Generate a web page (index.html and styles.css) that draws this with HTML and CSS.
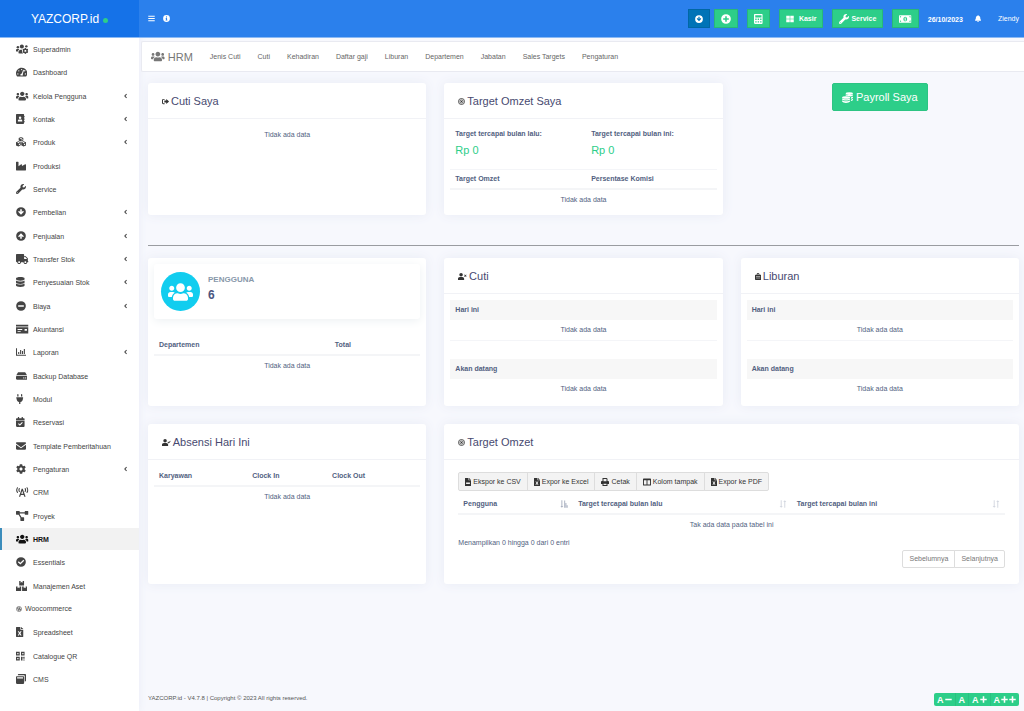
FILE: index.html
```html
<!DOCTYPE html>
<html lang="id">
<head>
<meta charset="utf-8">
<title>HRM - YAZCORP.id</title>
<meta name="viewport" content="width=device-width, initial-scale=1">
<link rel="stylesheet" href="styles.css">
</head>
<body>
<svg class="sprite" aria-hidden="true">
  <symbol id="users" viewBox="0 0 640 512"><path d="M96 224c35.3 0 64-28.7 64-64s-28.7-64-64-64-64 28.7-64 64 28.7 64 64 64zm448 0c35.3 0 64-28.7 64-64s-28.7-64-64-64-64 28.7-64 64 28.7 64 64 64zm32 32h-64c-17.600 0-33.500 7.100-45.100 18.600 40.300 22.100 68.900 62 75.100 109.400h66c17.700 0 32-14.300 32-32v-32c0-35.300-28.700-64-64-64zm-256 0c61.900 0 112-50.100 112-112S381.900 32 320 32 208 82.100 208 144s50.100 112 112 112zm76.800 32h-8.300c-20.800 10-43.900 16-68.500 16s-47.600-6-68.500-16h-8.300C179.600 288 128 339.600 128 403.200V432c0 26.500 21.500 48 48 48h288c26.500 0 48-21.500 48-48v-28.800c0-63.600-51.600-115.200-115.200-115.200zm-223.700-13.400C161.500 263.100 145.600 256 128 256H64c-35.300 0-64 28.700-64 64v32c0 17.700 14.300 32 32 32h65.900c6.300-47.400 34.900-87.300 75.200-109.400z"/></symbol>
  <symbol id="cog" viewBox="0 0 512 512"><path d="M487.400 315.700l-42.600-24.600c4.300-23.200 4.300-47 0-70.200l42.600-24.600c4.900-2.800 7.100-8.600 5.500-14-11.100-35.600-30-67.800-54.700-94.600-3.800-4.100-10-5.100-14.800-2.300L380.800 110c-17.900-15.400-38.500-27.300-60.800-35.100V25.800c0-5.600-3.900-10.500-9.400-11.700-36.700-8.200-74.300-7.800-109.200 0-5.500 1.200-9.400 6.100-9.400 11.700V75c-22.200 7.900-42.800 19.800-60.800 35.100L88.700 85.500c-4.900-2.800-11-1.900-14.800 2.300-24.700 26.700-43.600 58.900-54.700 94.600-1.700 5.400.6 11.200 5.500 14L67.300 221c-4.300 23.200-4.300 47 0 70.200l-42.600 24.600c-4.900 2.800-7.100 8.600-5.500 14 11.100 35.600 30 67.800 54.700 94.600 3.800 4.100 10 5.100 14.800 2.300l42.600-24.600c17.900 15.400 38.500 27.300 60.800 35.100v49.200c0 5.600 3.900 10.500 9.400 11.700 36.700 8.200 74.300 7.800 109.200 0 5.500-1.200 9.400-6.100 9.400-11.700v-49.200c22.200-7.900 42.800-19.800 60.800-35.100l42.600 24.600c4.900 2.800 11 1.900 14.800-2.300 24.700-26.700 43.600-58.900 54.700-94.600 1.500-5.500-.7-11.300-5.600-14.100zM256 336c-44.100 0-80-35.900-80-80s35.900-80 80-80 80 35.900 80 80-35.900 80-80 80z"/></symbol>
  <symbol id="users-cog" viewBox="0 0 640 512"><circle cx="96" cy="160" r="64"/><circle cx="300" cy="130" r="104"/><circle cx="530" cy="120" r="60"/><path d="M0 352v-32c0-35 29-64 64-64h64c18 0 34 7 45 19-40 22-69 62-75 109H32c-18 0-32-14-32-32zM128 432v-29c0-64 52-115 115-115h9c20 8 40 12 60 8-20 60-5 130 50 184H176c-27 0-48-21-48-48z"/><svg x="320" y="192" width="320" height="320" viewBox="0 0 512 512"><use href="#cog"/></svg></symbol>
  <symbol id="wrench" viewBox="0 0 512 512"><path d="M507.730 109.100c-2.240-9.030-13.540-12.090-20.120-5.510l-74.360 74.360-67.880-11.310-11.310-67.880 74.360-74.360c6.620-6.620 3.430-17.900-5.660-20.160-47.380-11.740-99.550.91-136.580 37.930-39.640 39.640-50.550 97.100-34.050 147.200L18.740 402.760c-24.990 24.990-24.990 65.510 0 90.500 24.990 24.990 65.510 24.990 90.500 0l213.210-213.210c50.120 16.710 107.470 5.680 147.370-34.220 37.070-37.070 49.700-89.320 37.910-136.730zM64 472c-13.250 0-24-10.750-24-24 0-13.260 10.750-24 24-24s24 10.740 24 24c0 13.250-10.750 24-24 24z"/></symbol>
  <symbol id="truck" viewBox="0 0 640 512"><path d="M624 352h-16V243.900c0-12.700-5.100-24.900-14.100-33.900L494 110.100c-9-9-21.200-14.100-33.900-14.100H416V48c0-26.500-21.500-48-48-48H48C21.500 0 0 21.500 0 48v320c0 26.500 21.500 48 48 48h16c0 53 43 96 96 96s96-43 96-96h128c0 53 43 96 96 96s96-43 96-96h48c8.800 0 16-7.200 16-16v-32c0-8.800-7.200-16-16-16zM160 464c-26.500 0-48-21.500-48-48s21.500-48 48-48 48 21.500 48 48-21.500 48-48 48zm320 0c-26.500 0-48-21.500-48-48s21.500-48 48-48 48 21.500 48 48-21.500 48-48 48zm80-208H416V144h44.100l99.900 99.900V256z"/></symbol>
  <symbol id="database" viewBox="0 0 448 512"><path d="M448 73v46c0 40-100 73-224 73S0 159 0 119V73C0 33 100 0 224 0s224 33 224 73zM448 176v103c0 40-100 73-224 73S0 319 0 279V176c48 33 136 49 224 49s176-16 224-49zm0 160v103c0 40-100 73-224 73S0 479 0 439V336c48 33 136 49 224 49s176-16 224-49z"/></symbol>
  <symbol id="gauge" viewBox="0 0 576 512"><path fill-rule="evenodd" d="M288 32C129 32 0 161 0 320c0 53 14 102 39 145 6 9 16 15 27 15h444c11 0 21-6 27-15 25-43 39-92 39-145C576 161 447 32 288 32zm0 64a32 32 0 1 1 0 64 32 32 0 0 1 0-64zM96 384a32 32 0 1 1 0-64 32 32 0 0 1 0 64zm48-160a32 32 0 1 1 0-64 32 32 0 0 1 0 64zm246-72c12 4 19 17 15 30l-61 184c15 16 13 38 2 66H230c-12-50 14-94 69-96l61-184c4-12 17-4 30 0zM432 224a32 32 0 1 1 32-64 32 32 0 0 1-32 64zm48 160a32 32 0 1 1 0-64 32 32 0 0 1 0 64z"/></symbol>
  <symbol id="contact" viewBox="0 0 448 512"><path fill-rule="evenodd" d="M48 0h320c27 0 48 21 48 48v48h32v64h-32v64h32v64h-32v64h32v64h-32v48c0 27-21 48-48 48H48c-27 0-48-21-48-48V48C0 21 21 0 48 0zm160 128a64 64 0 1 0 0 128 64 64 0 0 0 0-128zM96 384h224v-40c0-40-30-64-70-64h-84c-40 0-70 24-70 64z"/></symbol>
  <symbol id="cubes" viewBox="0 0 512 512"><path fill-rule="evenodd" d="M256 0l118 48v132l-118 52-118-52V48zM256 40l-70 28 70 30 70-30zM276 184l60-26V98l-60 26zM126 216l118 50v150l-118 64L0 430V268zM126 260l-68 26 68 30 68-30zM146 424l60-30v-62l-60 26zM386 216l126 52v162l-126 50-118-64V266zM386 260l-68 26 68 30 68-30zM406 424l62-26v-66l-62 26z"/></symbol>
  <symbol id="factory" viewBox="0 0 512 512"><path d="M0 56c0-14 10-24 24-24h80c14 0 24 10 24 24v210l136-102c16-10 40 0 40 20v78l168-96c18-8 40 2 40 22v268c0 14-10 24-24 24H24c-14 0-24-10-24-24z"/></symbol>
  <symbol id="down" viewBox="0 0 512 512"><path fill-rule="evenodd" d="M256 8a248 248 0 1 0 0 496 248 248 0 0 0 0-496zM216 110h80v142l58-56 50 50-148 150-148-150 50-50 58 56z"/></symbol>
  <symbol id="up" viewBox="0 0 512 512"><path fill-rule="evenodd" d="M256 8a248 248 0 1 0 0 496 248 248 0 0 0 0-496zM216 402h80V260l58 56 50-50-148-150-148 150 50 50 58-56z"/></symbol>
  <symbol id="minus-c" viewBox="0 0 512 512"><path fill-rule="evenodd" d="M256 8a248 248 0 1 0 0 496 248 248 0 0 0 0-496zM112 212h288v88H112z"/></symbol>
  <symbol id="plus-c" viewBox="0 0 512 512"><path fill-rule="evenodd" d="M256 8a248 248 0 1 0 0 496 248 248 0 0 0 0-496zM216 112h80v104h104v80H296v104h-80V296H112v-80h104z"/></symbol>
  <symbol id="info" viewBox="0 0 512 512"><path fill-rule="evenodd" d="M256 8a248 248 0 1 0 0 496 248 248 0 0 0 0-496zM256 100a44 44 0 1 1 0 88 44 44 0 0 1 0-88zM196 216h100v128h24v56H192v-56h24v-72h-20z"/></symbol>
  <symbol id="check-c" viewBox="0 0 512 512"><path fill-rule="evenodd" d="M256 8a248 248 0 1 0 0 496 248 248 0 0 0 0-496zM222 390L94 264l46-46 82 80 154-154 46 46z"/></symbol>
  <symbol id="money-check" viewBox="0 0 640 512"><path fill-rule="evenodd" d="M0 32h640v96H0zM0 160h640v320H0zM80 260v44h240v-44zM80 356v44h160v-44zM440 250v100h120V250z"/></symbol>
  <symbol id="chart" viewBox="0 0 512 512"><path d="M0 64h52v332h460v52H0zM110 250h56v110h-56zM210 150h56v210h-56zM305 210h56v150h-56zM400 100h56v260h-56z"/></symbol>
  <symbol id="hdd" viewBox="0 0 576 512"><path fill-rule="evenodd" d="M130 64h316c16 0 30 8 40 22l84 138c-14-8-24-10-42-10H48c-18 0-28 2-42 10L90 86c10-14 24-22 40-22zM48 256h480c27 0 48 21 48 48v96c0 27-21 48-48 48H48c-27 0-48-21-48-48v-96c0-27 21-48 48-48zM496 320a32 32 0 1 0 0 64 32 32 0 0 0 0-64zM400 320a32 32 0 1 0 0 64 32 32 0 0 0 0-64z"/></symbol>
  <symbol id="plug" viewBox="0 0 384 512"><path d="M64 32a32 32 0 0 1 64 0v96H64zM256 32a32 32 0 0 1 64 0v96h-64zM16 160h352v64h-16v32c0 78-54 142-128 157v99h-64v-99C86 398 32 334 32 256v-32H16z"/></symbol>
  <symbol id="calendar" viewBox="0 0 448 512"><path fill-rule="evenodd" d="M48 64h48V0h64v64h128V0h64v64h48c27 0 48 21 48 48v48H0v-48c0-27 21-48 48-48zM0 192h448v272c0 27-21 48-48 48H48c-27 0-48-21-48-48zM198 446l150-150-38-38-112 112-56-56-38 38z"/></symbol>
  <symbol id="mail" viewBox="0 0 512 512"><path d="M0 112c0-27 21-48 48-48h416c27 0 48 21 48 48v20L256 316 0 132zM0 192l256 176 256-176v208c0 27-21 48-48 48H48c-27 0-48-21-48-48z"/></symbol>
  <symbol id="antenna" viewBox="0 0 640 512"><path fill="none" stroke="currentColor" stroke-width="56" stroke-linecap="round" d="M76 36c-50 80-50 170 0 240M564 36c50 80 50 170 0 240M172 84c-28 46-28 98 0 144M468 84c28 46 28 98 0 144"/><path fill-rule="evenodd" d="M290 90h60l140 410h-66l-30-90H246l-30 90h-66zM320 196l-52 150h104z"/></symbol>
  <symbol id="project" viewBox="0 0 640 512"><path d="M24 0h144c14 0 24 10 24 24v40h256V24c0-14 10-24 24-24h144c14 0 24 10 24 24v144c0 14-10 24-24 24H472c-14 0-24-10-24-24v-40H192v32l92 160h108c14 0 24 10 24 24v144c0 14-10 24-24 24H248c-14 0-24-10-24-24V344l-90-152H24c-14 0-24-10-24-24V24C0 10 10 0 24 0z"/></symbol>
  <symbol id="boxes" viewBox="0 0 576 512"><path d="M164 0h70v90l54-34 54 34V0h70v224H164zM0 280h80v90l50-34 50 34v-90h84v232H0zM312 280h84v90l50-34 50 34v-90h80v232H312z"/></symbol>
  <symbol id="wp" viewBox="0 0 512 512"><circle cx="256" cy="256" r="220" fill="none" stroke="currentColor" stroke-width="44"/><path fill="none" stroke="currentColor" stroke-width="58" d="M100 150h110M130 160l80 230 60-200M240 150h120M270 160l80 230 60-170"/></symbol>
  <symbol id="file-x" viewBox="0 0 384 512"><path fill-rule="evenodd" d="M24 0h200v136h160v352c0 14-10 24-24 24H24c-14 0-24-10-24-24V24C0 10 10 0 24 0zM256 0l128 104H256zM90 220l62 100-62 110h62l36-68 38 68h62l-62-110 62-100h-62l-38 62-36-62z"/></symbol>
  <symbol id="file" viewBox="0 0 384 512"><path fill-rule="evenodd" d="M24 0h200v136h160v352c0 14-10 24-24 24H24c-14 0-24-10-24-24V24C0 10 10 0 24 0zM256 0l128 104H256zM70 290v90h244v-90z"/></symbol>
  <symbol id="qr" viewBox="0 0 448 512"><path fill-rule="evenodd" d="M0 32h192v192H0zm64 64v64h64V96zM256 32h192v192H256zm64 64v64h64V96zM0 288h192v192H0zm64 64v64h64v-64zM256 288h70v40h60v-40h62v110h-62v-30h-60v112h-70zM350 430h40v50h-40zM408 430h40v50h-40z"/></symbol>
  <symbol id="copies" viewBox="0 0 512 512"><path fill-rule="evenodd" d="M144 0h320c27 0 48 21 48 48v288c0 27-21 48-48 48h-16V112c0-27-21-48-48-48H96V48c0-27 21-48 48-48zM48 112h320c27 0 48 21 48 48v304c0 27-21 48-48 48H48c-27 0-48-21-48-48V160c0-27 21-48 48-48zM56 170v60h304v-60z"/></symbol>
  <symbol id="bars" viewBox="0 0 512 512"><path d="M20 60h472v64H20zM20 224h472v64H20zM20 388h472v64H20z"/></symbol>
  <symbol id="calc" viewBox="0 0 448 512"><path fill-rule="evenodd" d="M48 0h352c27 0 48 21 48 48v416c0 27-21 48-48 48H48c-27 0-48-21-48-48V48C0 21 21 0 48 0zM64 64v112h320V64zM64 236v70h70v-70zM189 236v70h70v-70zM314 236v70h70v-70zM64 370v70h70v-70zM189 370v70h70v-70zM314 370v70h70v-70z"/></symbol>
  <symbol id="grid4" viewBox="0 0 512 512"><path d="M16 48h224v192H16zM272 48h224v192H272zM16 272h224v192H16zM272 272h224v192H272z"/></symbol>
  <symbol id="cash" viewBox="0 0 640 512"><path fill-rule="evenodd" d="M32 64h576c18 0 32 14 32 32v320c0 18-14 32-32 32H32c-18 0-32-14-32-32V96c0-18 14-32 32-32zM48 400h64c0-35-29-64-64-64zM48 176c35 0 64-29 64-64H48zM320 136c-56 0-96 54-96 120s40 120 96 120 96-54 96-120-40-120-96-120zM592 400v-64c-35 0-64 29-64 64zM592 176v-64h-64c0 35 29 64 64 64z"/><path d="M296 180h44v116h24v40h-88v-40h20v-70h-20z"/></symbol>
  <symbol id="bell" viewBox="0 0 448 512"><path d="M224 0c20 0 32 14 32 52 74 15 128 74 128 156 0 100 30 128 58 158 12 16 0 50-26 50H32c-26 0-38-34-26-50 28-30 58-58 58-158 0-82 54-141 128-156 0-38 12-52 32-52zM160 448h128a64 64 0 0 1-128 0z"/></symbol>
  <symbol id="exit" viewBox="0 0 512 512"><path d="M190 64v70H100c-18 0-30 12-30 32v180c0 20 12 32 30 32h90v70H96c-53 0-96-43-96-96V160c0-53 43-96 96-96zM310 80l190 156c12 12 12 28 0 40L310 432v-96H170V176h140z"/></symbol>
  <symbol id="target" viewBox="0 0 512 512"><circle cx="256" cy="256" r="220" fill="none" stroke="currentColor" stroke-width="60"/><circle cx="256" cy="256" r="115" fill="none" stroke="currentColor" stroke-width="54"/><circle cx="256" cy="256" r="50"/></symbol>
  <symbol id="user-x" viewBox="0 0 640 512"><circle cx="224" cy="128" r="128"/><path d="M0 512V420c0-75 60-132 134-132h180c74 0 134 57 134 132v92zM450 150l40-40 50 50 50-50 40 40-50 50 50 50-40 40-50-50-50 50-40-40 50-50z"/></symbol>
  <symbol id="user-check" viewBox="0 0 640 512"><circle cx="224" cy="128" r="128"/><path d="M0 512V420c0-75 60-132 134-132h180c74 0 134 57 134 132v92zM400 230l44-44 52 52 100-110 44 44-144 154z"/></symbol>
  <symbol id="bag" viewBox="0 0 448 512"><path fill-rule="evenodd" d="M128 130V80c0-50 40-80 96-80s96 30 96 80v50h80c27 0 48 21 48 48v286c0 27-21 48-48 48H48c-27 0-48-21-48-48V178c0-27 21-48 48-48zM180 130h88V84c0-40-88-40-88 0zM70 230v40h308v-40zM70 340v40h308v-40z"/></symbol>
  <symbol id="coins" viewBox="0 0 512 512"><ellipse cx="340" cy="70" rx="168" ry="64"/><path d="M172 100c60 60 276 60 336 0v60c-30 30-70 44-128 50-40-24-120-36-208-36zM420 250c40-6 70-20 90-40v56c-20 26-50 40-90 46zM420 356c40-6 70-20 90-40v56c-20 26-50 40-90 46z"/><ellipse cx="190" cy="256" rx="188" ry="60"/><path d="M4 296c70 60 310 60 372 0v50c-70 64-310 64-372 0zM4 386c70 60 310 60 372 0v60c-50 80-320 90-372 0z"/></symbol>
  <symbol id="print" viewBox="0 0 512 512"><path fill-rule="evenodd" d="M96 0h270l50 50v142h32c35 0 64 29 64 64v128h-96v128H96V384H0V256c0-35 29-64 64-64h32zM160 64v140h192V64zM160 360v88h192v-88z"/></symbol>
  <symbol id="columns" viewBox="0 0 512 512"><path fill-rule="evenodd" d="M40 32h432c22 0 40 18 40 40v368c0 22-18 40-40 40H40c-22 0-40-18-40-40V72c0-22 18-40 40-40zM60 150v270h166V150zM286 150v270h166V150z"/></symbol>
  <symbol id="sort" viewBox="0 0 512 512"><path d="M110 20h60v360h70L140 500 40 380h70zM340 492h60V132h70L370 12 270 132h70z"/></symbol>
  <symbol id="sort-asc" viewBox="0 0 512 512"><path d="M90 20h60v360h60L120 500 30 380h60zM270 30h60v460h-60zM350 190h60v300h-60zM430 330h60v160h-60z"/></symbol>
  <symbol id="left" viewBox="0 0 256 512"><path fill="none" stroke="currentColor" stroke-width="90" d="M220 90L70 256l150 166"/></symbol>
  <symbol id="minus" viewBox="0 0 512 512"><path d="M20 200h472v112H20z"/></symbol>
  <symbol id="plus" viewBox="0 0 512 512"><path d="M200 20h112v180h180v112H312v180H200V312H20V200h180z"/></symbol>
</svg>

<aside class="sidebar">
  <a class="brand" href="#">YAZCORP.id <span class="online"></span></a>
  <nav class="menu" aria-label="Menu utama">
    <a href="#"><svg viewBox="0 0 640 512"><use href="#users-cog"/></svg><span>Superadmin</span></a>
    <a href="#"><svg viewBox="0 0 576 512"><use href="#gauge"/></svg><span>Dashboard</span></a>
    <a href="#"><svg viewBox="0 0 640 512"><use href="#users"/></svg><span>Kelola Pengguna</span><svg class="arrow" viewBox="0 0 256 512"><use href="#left"/></svg></a>
    <a href="#"><svg viewBox="0 0 448 512"><use href="#contact"/></svg><span>Kontak</span><svg class="arrow" viewBox="0 0 256 512"><use href="#left"/></svg></a>
    <a href="#"><svg viewBox="0 0 512 512"><use href="#cubes"/></svg><span>Produk</span><svg class="arrow" viewBox="0 0 256 512"><use href="#left"/></svg></a>
    <a href="#"><svg viewBox="0 0 512 512"><use href="#factory"/></svg><span>Produksi</span></a>
    <a href="#"><svg viewBox="0 0 512 512"><use href="#wrench"/></svg><span>Service</span></a>
    <a href="#"><svg viewBox="0 0 512 512"><use href="#down"/></svg><span>Pembelian</span><svg class="arrow" viewBox="0 0 256 512"><use href="#left"/></svg></a>
    <a href="#"><svg viewBox="0 0 512 512"><use href="#up"/></svg><span>Penjualan</span><svg class="arrow" viewBox="0 0 256 512"><use href="#left"/></svg></a>
    <a href="#"><svg viewBox="0 0 640 512"><use href="#truck"/></svg><span>Transfer Stok</span><svg class="arrow" viewBox="0 0 256 512"><use href="#left"/></svg></a>
    <a href="#"><svg viewBox="0 0 448 512"><use href="#database"/></svg><span>Penyesuaian Stok</span><svg class="arrow" viewBox="0 0 256 512"><use href="#left"/></svg></a>
    <a href="#"><svg viewBox="0 0 512 512"><use href="#minus-c"/></svg><span>Biaya</span><svg class="arrow" viewBox="0 0 256 512"><use href="#left"/></svg></a>
    <a href="#"><svg viewBox="0 0 640 512"><use href="#money-check"/></svg><span>Akuntansi</span></a>
    <a href="#"><svg viewBox="0 0 512 512"><use href="#chart"/></svg><span>Laporan</span><svg class="arrow" viewBox="0 0 256 512"><use href="#left"/></svg></a>
    <a href="#"><svg viewBox="0 0 576 512"><use href="#hdd"/></svg><span>Backup Database</span></a>
    <a href="#"><svg viewBox="0 0 384 512"><use href="#plug"/></svg><span>Modul</span></a>
    <a href="#"><svg viewBox="0 0 448 512"><use href="#calendar"/></svg><span>Reservasi</span></a>
    <a href="#"><svg viewBox="0 0 512 512"><use href="#mail"/></svg><span>Template Pemberitahuan</span></a>
    <a href="#"><svg viewBox="0 0 512 512"><use href="#cog"/></svg><span>Pengaturan</span><svg class="arrow" viewBox="0 0 256 512"><use href="#left"/></svg></a>
    <a href="#"><svg viewBox="0 0 640 512"><use href="#antenna"/></svg><span>CRM</span></a>
    <a href="#"><svg viewBox="0 0 640 512"><use href="#project"/></svg><span>Proyek</span></a>
    <a class="active" href="#" aria-current="page"><svg viewBox="0 0 640 512"><use href="#users"/></svg><span>HRM</span></a>
    <a href="#"><svg viewBox="0 0 512 512"><use href="#check-c"/></svg><span>Essentials</span></a>
    <a href="#"><svg viewBox="0 0 576 512"><use href="#boxes"/></svg><span>Manajemen Aset</span></a>
    <a class="compact" href="#"><svg viewBox="0 0 512 512"><use href="#wp"/></svg><span>Woocommerce</span></a>
    <a href="#"><svg viewBox="0 0 384 512"><use href="#file-x"/></svg><span>Spreadsheet</span></a>
    <a href="#"><svg viewBox="0 0 448 512"><use href="#qr"/></svg><span>Catalogue QR</span></a>
    <a href="#"><svg viewBox="0 0 512 512"><use href="#copies"/></svg><span>CMS</span></a>
  </nav>
</aside>

<div class="page">
  <header class="topbar">
    <button class="plain" type="button" aria-label="Menu"><svg viewBox="0 0 512 512"><use href="#bars"/></svg></button>
    <button class="plain" type="button" aria-label="Info"><svg viewBox="0 0 512 512"><use href="#info"/></svg></button>
    <div class="actions">
      <button class="btn blue" type="button" aria-label="Unduh"><svg class="small" viewBox="0 0 512 512"><use href="#down"/></svg></button>
      <button class="btn first" type="button" aria-label="Tambah"><svg viewBox="0 0 512 512"><use href="#plus-c"/></svg></button>
      <button class="btn" type="button" aria-label="Kalkulator"><svg viewBox="0 0 448 512"><use href="#calc"/></svg></button>
      <button class="btn pos" type="button"><svg class="small" viewBox="0 0 512 512"><use href="#grid4"/></svg>Kasir</button>
      <button class="btn" type="button"><svg viewBox="0 0 512 512"><use href="#wrench"/></svg>Service</button>
      <button class="btn" type="button" aria-label="Kas"><svg viewBox="0 0 640 512"><use href="#cash"/></svg></button>
      <strong class="date">26/10/2023</strong>
      <button class="plain bell" type="button" aria-label="Notifikasi"><svg viewBox="0 0 448 512"><use href="#bell"/></svg></button>
      <a class="account" href="#">Ziendy</a>
    </div>
  </header>

  <nav class="subnav" aria-label="HRM">
    <a class="title" href="#"><svg viewBox="0 0 640 512"><use href="#users"/></svg>HRM</a>
    <a href="#">Jenis Cuti</a><a href="#">Cuti</a><a href="#">Kehadiran</a><a href="#">Daftar gaji</a><a href="#">Liburan</a><a href="#">Departemen</a><a href="#">Jabatan</a><a href="#">Sales Targets</a><a href="#">Pengaturan</a>
  </nav>

  <main>
    <div class="row top">
      <section class="card">
        <h2><svg viewBox="0 0 512 512"><use href="#exit"/></svg>Cuti Saya</h2>
        <div class="body"><table><tbody><tr><td class="empty">Tidak ada data</td></tr></tbody></table></div>
      </section>
      <section class="card">
        <h2><svg viewBox="0 0 512 512"><use href="#target"/></svg>Target Omzet Saya</h2>
        <div class="body">
          <table>
            <colgroup><col class="w51"><col></colgroup>
            <tbody>
              <tr class="totals"><td><b>Target tercapai bulan lalu:</b><span>Rp 0</span></td><td><b>Target tercapai bulan ini:</b><span>Rp 0</span></td></tr>
              <tr class="heads"><th>Target Omzet</th><th>Persentase Komisi</th></tr>
              <tr><td class="empty" colspan="2">Tidak ada data</td></tr>
            </tbody>
          </table>
        </div>
      </section>
      <div class="payroll"><button type="button"><svg viewBox="0 0 512 512"><use href="#coins"/></svg>Payroll Saya</button></div>
    </div>

    <hr>

    <div class="row mid">
      <section class="card">
        <div class="body">
          <div class="stat">
            <span class="disc"><svg viewBox="0 0 640 512"><use href="#users"/></svg></span>
            <div><div class="label">PENGGUNA</div><div class="count">6</div></div>
          </div>
          <table>
            <colgroup><col class="w66"><col></colgroup>
            <thead><tr><th>Departemen</th><th>Total</th></tr></thead>
            <tbody><tr><td class="empty" colspan="2">Tidak ada data</td></tr></tbody>
          </table>
        </div>
      </section>
      <section class="card">
        <h2><svg viewBox="0 0 640 512"><use href="#user-x"/></svg>Cuti</h2>
        <div class="body">
          <table><tbody>
            <tr class="band"><th>Hari ini</th></tr>
            <tr class="ruled"><td class="empty">Tidak ada data</td></tr>
            <tr class="gap"><td></td></tr>
            <tr class="band"><th>Akan datang</th></tr>
            <tr><td class="empty">Tidak ada data</td></tr>
          </tbody></table>
        </div>
      </section>
      <section class="card">
        <h2><svg viewBox="0 0 448 512"><use href="#bag"/></svg>Liburan</h2>
        <div class="body">
          <table><tbody>
            <tr class="band"><th>Hari ini</th></tr>
            <tr class="ruled"><td class="empty">Tidak ada data</td></tr>
            <tr class="gap"><td></td></tr>
            <tr class="band"><th>Akan datang</th></tr>
            <tr><td class="empty">Tidak ada data</td></tr>
          </tbody></table>
        </div>
      </section>
    </div>

    <div class="row low">
      <section class="card">
        <h2><svg viewBox="0 0 640 512"><use href="#user-check"/></svg>Absensi Hari Ini</h2>
        <div class="body">
          <table>
            <colgroup><col class="w35"><col class="w30"><col></colgroup>
            <thead><tr><th>Karyawan</th><th>Clock In</th><th>Clock Out</th></tr></thead>
            <tbody><tr><td class="empty" colspan="3">Tidak ada data</td></tr></tbody>
          </table>
        </div>
      </section>
      <section class="card wide">
        <h2><svg viewBox="0 0 512 512"><use href="#target"/></svg>Target Omzet</h2>
        <div class="body roomy">
          <div class="tools">
            <button type="button"><svg viewBox="0 0 384 512"><use href="#file"/></svg>Ekspor ke CSV</button>
            <button type="button"><svg viewBox="0 0 384 512"><use href="#file-x"/></svg>Expor ke Excel</button>
            <button type="button"><svg viewBox="0 0 512 512"><use href="#print"/></svg>Cetak</button>
            <button type="button"><svg viewBox="0 0 512 512"><use href="#columns"/></svg>Kolom tampak</button>
            <button type="button"><svg viewBox="0 0 384 512"><use href="#file-x"/></svg>Expor ke PDF</button>
          </div>
          <table>
            <colgroup><col class="w21"><col class="w40"><col></colgroup>
            <thead><tr>
              <th><div class="sortable">Pengguna<svg class="on" viewBox="0 0 512 512"><use href="#sort-asc"/></svg></div></th>
              <th><div class="sortable">Target tercapai bulan lalu<svg viewBox="0 0 512 512"><use href="#sort"/></svg></div></th>
              <th><div class="sortable">Target tercapai bulan ini<svg viewBox="0 0 512 512"><use href="#sort"/></svg></div></th>
            </tr></thead>
            <tbody><tr><td class="empty" colspan="3">Tak ada data pada tabel ini</td></tr></tbody>
          </table>
          <p class="info">Menampilkan 0 hingga 0 dari 0 entri</p>
          <div class="pager"><button type="button">Sebelumnya</button><button type="button">Selanjutnya</button></div>
        </div>
      </section>
    </div>
  </main>

  <footer>
    <small>YAZCORP.id - V4.7.8 | Copyright © 2023 All rights reserved.</small>
    <div class="fontsize">
      <button type="button">A<svg viewBox="0 0 512 512"><use href="#minus"/></svg></button>
      <button type="button">A</button>
      <button type="button">A<svg viewBox="0 0 512 512"><use href="#plus"/></svg></button>
      <button type="button">A<svg viewBox="0 0 512 512"><use href="#plus"/></svg><svg viewBox="0 0 512 512"><use href="#plus"/></svg></button>
    </div>
  </footer>
</div>
</body>
</html>
```

FILE: styles.css
```css
* { box-sizing: border-box; }

body {
  margin: 0;
  min-height: 100vh;
  display: grid;
  grid-template-columns: 139px minmax(0, 1fr);
  background: #f7f8fd;
  color: #525f7f;
  font: 7px/10px "Liberation Sans", Arial, sans-serif;
}

button { font: inherit; color: inherit; margin: 0; cursor: pointer; }
a { color: inherit; text-decoration: none; }
svg { display: block; flex: none; fill: currentColor; }
.sprite { display: none; }

/* Sidebar */
.sidebar {
  display: flex;
  flex-direction: column;
  background: #fff;
  box-shadow: 0 0 8px #e9ecf6;
}
.brand {
  display: flex;
  align-items: center;
  justify-content: center;
  gap: 4px;
  height: 38px;
  background: #1572e8;
  border-bottom: 1px solid #8ab9f4;
  color: #fff;
  font-size: 12px;
}
.online { width: 5px; height: 5px; margin-top: 3px; border-radius: 50%; background: #2dce89; }
.menu {
  flex: 1;
  display: flex;
  flex-direction: column;
  justify-content: space-between;
  padding-bottom: 21px;
}
.menu a {
  display: grid;
  grid-template-columns: 14px 1fr auto;
  align-items: center;
  gap: 3px;
  height: 22px;
  padding: 0 12px 0 16px;
  color: #444;
}
.menu a > svg { height: 10px; }
.menu span { padding-top: 2px; }
.menu a > .arrow { height: 6px; }
.menu .active {
  padding-left: 14px;
  border-left: 2px solid #3c8dbc;
  background: #f2f2f2;
  color: #111;
  font-weight: bold;
}
.menu .compact { display: flex; }
.menu .compact > svg { height: 6px; }
.menu .compact span { padding: 0; }

/* Top bar */
.page { display: flex; flex-direction: column; min-width: 0; }
.topbar {
  position: relative;
  display: flex;
  align-items: center;
  gap: 8px;
  height: 38px;
  padding: 0 5px 0 9px;
  background: #2b80ec;
  border-bottom: 1px solid #8ab9f4;
  color: #fff;
}
.plain { padding: 0; border: 0; background: none; }
.plain svg { height: 7px; }
.actions { display: flex; align-items: center; gap: 9px; margin-left: auto; }
.btn {
  display: flex;
  align-items: center;
  justify-content: center;
  gap: 2px;
  height: 19px;
  padding: 0 6px;
  border: 1px solid #28b779;
  background: #2dce89;
  font-weight: bold;
}
.btn svg { height: 10px; }
.btn .small { height: 8px; }
.btn.blue { background: #0073b7; border-color: #0067a5; }
.btn.first { margin-left: -5px; }
.btn.pos { gap: 5px; }
.date { padding-top: 3px; }
.bell { margin: 0 8px 0 3px; }

/* Section navigation */
.subnav {
  display: flex;
  align-items: center;
  gap: 17px;
  height: 31px;
  margin: 3px 0 0 2px;
  padding: 0 9px;
  background: #fff;
  border: 1px solid #e9eaf1;
  border-right: 0;
  border-radius: 2px 0 0 2px;
  color: #666;
}
.subnav .title { display: flex; align-items: center; gap: 3px; color: #777; font-size: 11px; }
.subnav svg { height: 11px; }

/* Cards */
main { flex: 1; padding: 11px 5px 0 9px; }
.row {
  display: grid;
  grid-template-columns: repeat(3, minmax(0, 1fr));
  gap: 18px;
}
.top { min-height: 132px; }
.mid { min-height: 148px; margin-bottom: 18px; }
.low { min-height: 160px; }
.wide { grid-column: span 2; }
hr { margin: 30px 0 12px; border: 0; border-top: 1px solid #9a9ca1; }
.card { background: #fff; border-radius: 3px; box-shadow: 0 0 12px #e8ebf5; }
.card h2 {
  display: flex;
  align-items: center;
  gap: 2px;
  height: 36px;
  margin: 0;
  padding: 0 14px;
  border-bottom: 1px solid #f1f2f6;
  color: #484a70;
  font-size: 11px;
  font-weight: normal;
}
.card h2 svg { height: 7px; margin-top: 2px; color: #333; }
.body { padding: 6px; }

table { width: 100%; border-collapse: collapse; table-layout: fixed; }
th, td { height: 20px; padding: 0 5px; text-align: left; }
th { font-weight: bold; }
thead th, .heads th { border-bottom: 2px solid #f4f5f7; }
.empty { text-align: center; }
.w66 { width: 66%; }
.w51 { width: 51%; }
.w35 { width: 35%; }
.w30 { width: 30%; }
.w21 { width: 21%; }
.w40 { width: 40%; }

.totals td { height: 44px; padding-bottom: 7px; border-bottom: 1px solid #f4f5f8; }
.totals b, .totals span { display: block; }
.totals span { margin-top: 4px; color: #2dce89; font-size: 11px; line-height: 14px; }
.band { background: #f7f7f7; }
.ruled td { border-bottom: 1px solid #f4f5f8; }
.gap td { height: 19px; }

.stat {
  display: flex;
  align-items: center;
  gap: 8px;
  height: 55px;
  margin-bottom: 16px;
  padding: 0 7px;
  border-radius: 3px;
  box-shadow: 0 2px 10px #edf1f3;
}
.disc {
  display: grid;
  place-items: center;
  width: 39px;
  height: 39px;
  border-radius: 50%;
  background: #11cdef;
  color: #fff;
}
.disc svg { height: 20px; }
.stat .label { color: #8898aa; font-size: 8px; font-weight: bold; }
.stat .count { margin: 3px 0 6px; font-size: 12px; font-weight: bold; line-height: 14px; color: #4b5580; }

/* Data table */
.roomy { padding: 12px 14px 16px; }
.tools, .pager { display: flex; }
.tools { width: max-content; margin-bottom: 3px; color: #333; }
.tools button {
  display: flex;
  align-items: center;
  gap: 2px;
  height: 19px;
  padding: 0 6px;
  border: 1px solid #ddd;
  background: #f3f3f3;
}
.tools svg { height: 8px; }
.tools button + button, .pager button + button { margin-left: -1px; }
.tools button:first-child, .pager button:first-child { border-radius: 2px 0 0 2px; }
.tools button:last-child, .pager button:last-child { border-radius: 0 2px 2px 0; }
.sortable { display: flex; justify-content: space-between; align-items: center; }
.sortable svg { height: 8px; color: #d3d7e0; }
.sortable .on { color: #a9b0c0; }
.info { margin: 4px 0 2px; }
.pager { justify-content: flex-end; }
.pager button {
  height: 18px;
  padding: 0 6px;
  border: 1px solid #ddd;
  background: #fff;
  color: #777;
}

/* Payroll and footer */
.payroll { display: flex; justify-content: center; align-items: flex-start; }
.payroll button {
  display: flex;
  align-items: center;
  gap: 3px;
  height: 28px;
  padding: 0 9px;
  border: 1px solid #2dc483;
  border-radius: 2px;
  background: #2dce89;
  color: #fff;
  font-size: 11px;
}
.payroll svg { height: 11px; }
footer {
  display: flex;
  align-items: center;
  justify-content: space-between;
  padding: 0 5px 5px 9px;
}
footer small { font-size: 6px; line-height: 8px; color: #555; padding-bottom: 4px; }
.fontsize { display: flex; overflow: hidden; border-radius: 2px; background: #2dce89; }
.fontsize button {
  display: flex;
  align-items: center;
  gap: 1px;
  height: 13px;
  padding: 0 3px;
  border: 0;
  border-right: 1px solid #2ac181;
  background: none;
  color: #fff;
  font-size: 9px;
  font-weight: bold;
}
.fontsize button:last-child { border: 0; }
.fontsize svg { height: 7px; }
```
